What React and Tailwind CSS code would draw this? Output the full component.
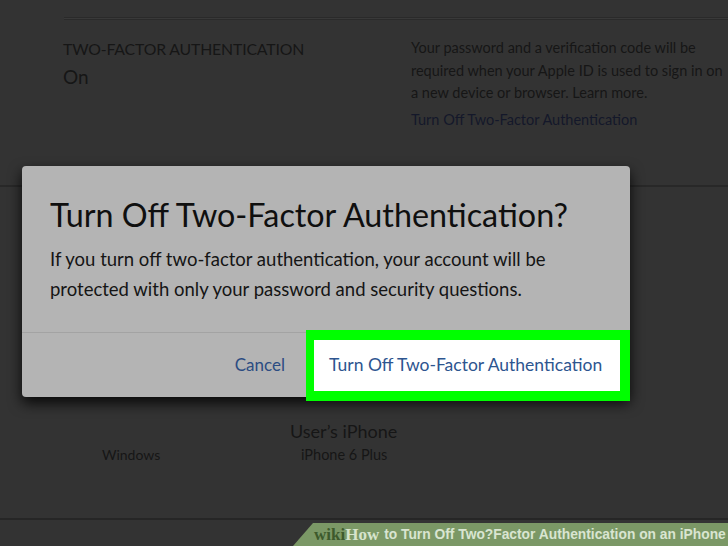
export default function App() {
  const font = { fontFamily: 'Lato, "Liberation Sans", sans-serif' };
  return (
    <div className="relative w-[728px] h-[546px] overflow-hidden bg-[#333333] text-[#161616]" style={font}>
      {/* page behind the dialog */}
      <div className="ml-[64px] mt-[17px] h-[3px] border-y border-[#2a2a2a] bg-[#393939]" />
      <div className="flex pl-[63px] pt-[17px] h-[165px]">
        <div className="w-[349px]">
          <div className="text-[15.8px] leading-[24px] tracking-[-0.15px]">TWO-FACTOR AUTHENTICATION</div>
          <div className="text-[19px] leading-[28px] mt-[2px]">On</div>
        </div>
        <div className="w-[318px] text-[14.5px] leading-[22.5px]">
          <p>Your password and a verification code will be required when your Apple ID is used to sign in on a new device or browser. Learn more.</p>
          <p className="mt-[4px] text-[#14182a]">Turn Off Two-Factor Authentication</p>
        </div>
      </div>
      <div className="h-[2px] bg-[#282828]" />
      <div className="flex pt-[231px]">
        <div className="w-[290px] pl-[102px] pt-[26px] text-[14px] leading-[22px]">Windows</div>
        <div className="flex flex-col">
          <div className="text-[18px] leading-[26px]">User’s iPhone</div>
          <div className="pl-[11px] text-[14.5px] leading-[22px]">iPhone 6 Plus</div>
        </div>
      </div>

      {/* footer strip with wikiHow caption */}
      <div className="absolute inset-x-0 bottom-0 h-[28px]">
        <div className="h-[2px] bg-[#262626]" />
        <div className="flex h-[26px] items-end">
          <div className="ml-auto flex h-[23px] w-[435px] items-center whitespace-nowrap bg-[#7b9866] pl-[21px] pt-[1px] [clip-path:polygon(20px_0,100%_0,100%_100%,0_100%)]">
            <span className="text-[17px] font-bold text-[#3d5a2c]" style={{ fontFamily: '"Liberation Serif", serif' }}>wiki</span>
            <span className="text-[17px] font-bold text-[#d6e4cc]" style={{ fontFamily: '"Liberation Serif", serif' }}>How</span>
            <span className="ml-[5px] text-[13.8px] font-bold text-[#d9e5d1]" style={{ fontFamily: '"Liberation Sans", Arial, sans-serif' }}>
              to Turn Off Two?Factor Authentication on an iPhone
            </span>
          </div>
        </div>
      </div>

      {/* modal dialog */}
      <div className="absolute left-[22px] top-[166px] flex h-[231px] w-[608px] flex-col rounded-[4px] bg-[#b4b4b4] shadow-[0_6px_14px_rgba(0,0,0,0.85)]">
        <div className="px-[28px] pt-[28px]">
          <h1 className="whitespace-nowrap text-[32.3px] leading-[42px] text-[#0f0f0f]">Turn Off Two-Factor Authentication?</h1>
          <p className="mt-[8px] text-[18.5px] leading-[30px] text-[#151515]">
            If you turn off two-factor authentication, your account will be protected with only your password and security questions.
          </p>
        </div>
        <div className="mt-auto flex h-[65px] items-center justify-end border-t border-[#a3a3a3]">
          <span className="mr-[21px] text-[17px] text-[#2c4c82]">Cancel</span>
          <div className="flex h-[71px] w-[324px] items-center whitespace-nowrap border-y-[10px] border-l-[8px] border-r-[10px] border-[#00ff00] bg-white pl-[15px] text-[17.5px] text-[#2d558f]">
            Turn Off Two-Factor Authentication
          </div>
        </div>
      </div>
    </div>
  );
}
